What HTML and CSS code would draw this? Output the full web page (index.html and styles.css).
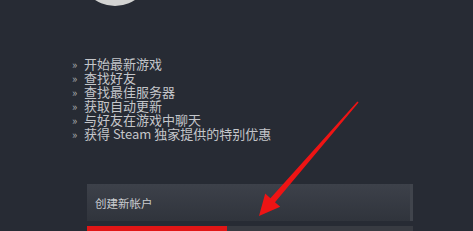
FILE: index.html
```html
<!DOCTYPE html>
<html lang="zh">
<head>
<meta charset="utf-8">
<link rel="stylesheet" href="styles.css">
</head>
<body>
<div class="page">
  <div class="avatar-wrap"><div class="avatar"></div></div>
  <ul class="features">
    <li><span class="bullet">»</span>开始最新游戏</li>
    <li><span class="bullet">»</span>查找好友</li>
    <li><span class="bullet">»</span>查找最佳服务器</li>
    <li><span class="bullet">»</span>获取自动更新</li>
    <li><span class="bullet">»</span>与好友在游戏中聊天</li>
    <li><span class="bullet">»</span>获得 Steam 独家提供的特别优惠</li>
  </ul>
  <div class="btn-create">创建新帐户</div>
  <div class="btn-login"><div class="highlight"></div></div>
  <svg class="arrow" width="473" height="231" viewBox="0 0 473 231">
    <polygon points="358.6,102.5 275,202.2 280.2,206.8 259,216 265.2,193.6 270.4,198.2 357.4,101.5" fill="#ee1414"/>
  </svg>
</div>
</body>
</html>
```
FILE: styles.css
```css
html, body {
  margin: 0;
  padding: 0;
}
body {
  background: #272b34;
  font-family: "Noto Sans CJK SC", "Noto Sans", sans-serif;
  overflow: hidden;
}
.page {
  position: relative;
  width: 473px;
  height: 231px;
  overflow: hidden;
}
.avatar-wrap {
  height: 6px;
  overflow: hidden;
  padding-left: 79px;
}
.avatar {
  width: 72px;
  height: 72px;
  border-radius: 50%;
  background: #d3d3d2;
  margin-top: -66px;
}
.features {
  list-style: none;
  margin: 51px 0 0 0;
  padding: 0 0 0 72px;
  font-size: 13px;
  line-height: 14px;
  color: #c4c6ca;
}
.features li {
  display: flex;
  align-items: center;
  white-space: nowrap;
}
.bullet {
  width: 12px;
  font-size: 11px;
  color: #a9abb0;
}
.btn-create {
  margin: 43px 0 0 87px;
  width: 318px;
  height: 37px;
  padding-left: 8px;
  box-sizing: content-box;
  display: flex;
  align-items: center;
  font-size: 11.5px;
  color: #c9cbcf;
  background: linear-gradient(#3d414a, #30343c);
  border-right: 3px solid #40444c;
  box-sizing: border-box;
  width: 326px;
}
.btn-login {
  margin: 5px 0 0 87px;
  width: 326px;
  height: 6px;
  background: #383b42;
  display: flex;
}
.highlight {
  width: 140px;
  background: #e11616;
}
.arrow {
  position: absolute;
  left: 0;
  top: 0;
}
```
